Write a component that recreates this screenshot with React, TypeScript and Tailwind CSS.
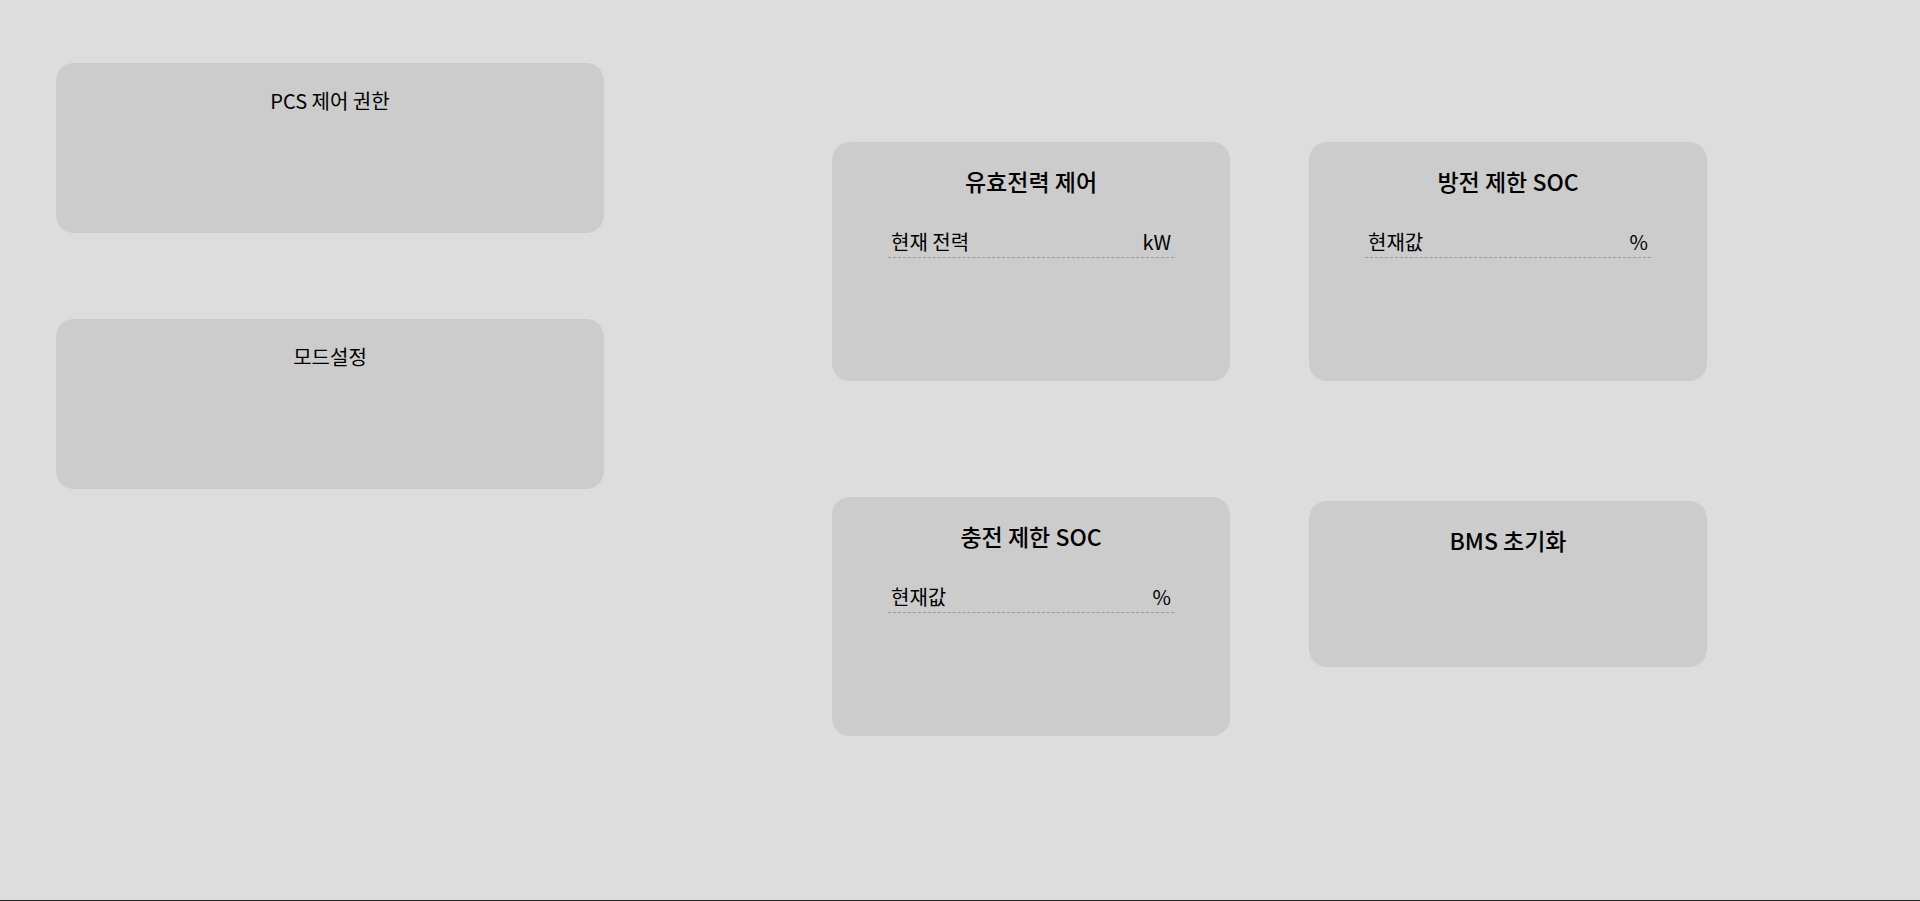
import React from 'react';

const font = { fontFamily: '"Noto Sans CJK KR", "Noto Sans", sans-serif' };

const SideCard: React.FC<{ title: string }> = ({ title }) => (
  <div className="h-[170px] w-[548px] rounded-[18px] bg-[#cccccc] pt-[25px] text-center">
    <h3 className="text-[20px] leading-[26px] font-normal text-black">{title}</h3>
  </div>
);

const ValueRow: React.FC<{ label: string; unit: string }> = ({ label, unit }) => (
  <div className="mx-[56px] mt-[35px] flex items-center justify-between border-b border-dashed border-[#9a9a9a] px-[3px] pb-[3px] text-[20px] leading-[24px] text-black">
    <span>{label}</span>
    <span>{unit}</span>
  </div>
);

const ControlCard: React.FC<{ title: string; height?: string; children?: React.ReactNode; offset?: boolean }> = ({
  title,
  height = 'h-[239px]',
  children,
  offset,
}) => (
  <div className={`${height} ${offset ? 'mt-[4px]' : ''} w-[398px] rounded-[18px] bg-[#cccccc] pt-[25px]`}>
    <h3 className="text-center text-[23px] leading-[28px] font-medium text-black">{title}</h3>
    {children}
  </div>
);

export default function App() {
  return (
    <div className="flex h-[901px] w-full border-b border-[#222222] bg-[#dddddd]" style={font}>
      <div className="ml-[56px] mt-[63px] flex flex-col gap-[86px]">
        <SideCard title="PCS 제어 권한" />
        <SideCard title="모드설정" />
      </div>

      <div className="ml-[228px] mt-[142px] grid grid-cols-[398px_398px] content-start items-start gap-x-[79px] gap-y-[116px]">
        <ControlCard title="유효전력 제어">
          <ValueRow label="현재 전력" unit="kW" />
        </ControlCard>
        <ControlCard title="방전 제한 SOC">
          <ValueRow label="현재값" unit="%" />
        </ControlCard>
        <ControlCard title="충전 제한 SOC">
          <ValueRow label="현재값" unit="%" />
        </ControlCard>
        <ControlCard title="BMS 초기화" height="h-[166px]" offset />
      </div>
    </div>
  );
}
